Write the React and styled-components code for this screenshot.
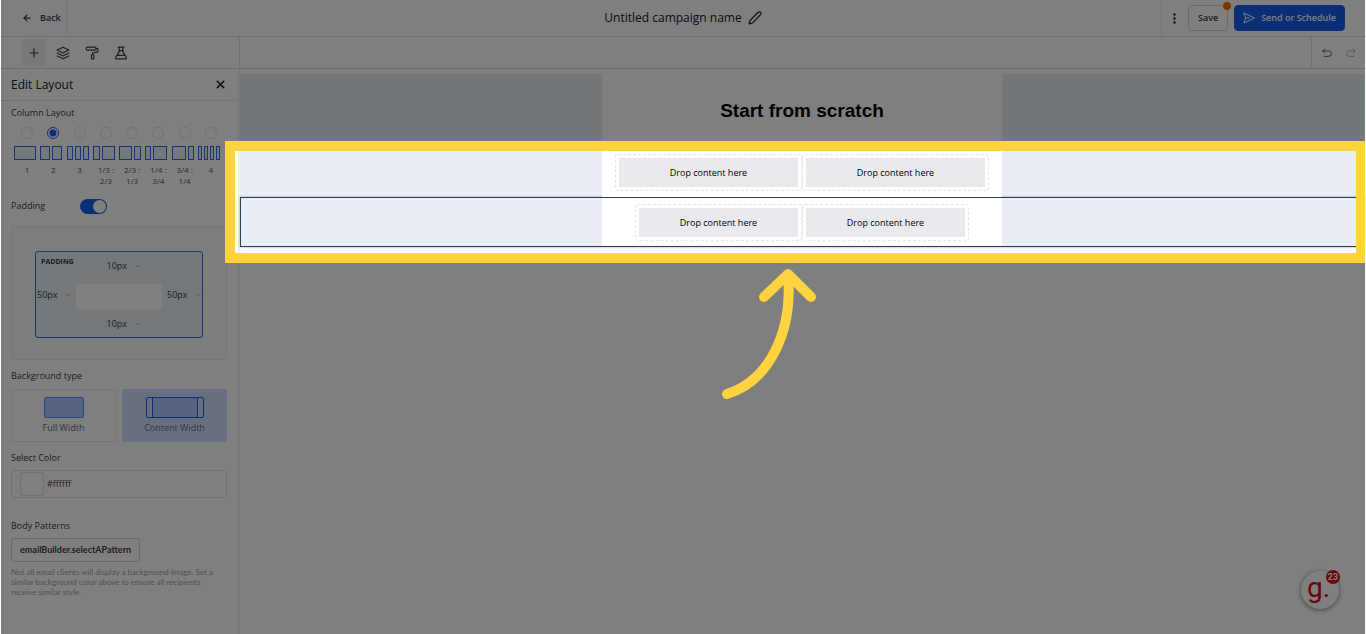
/** Email campaign builder: layout editing panel with a highlighted canvas area */

import { useState } from "react";
import styled, { createGlobalStyle } from "styled-components";
import { FiArrowLeft, FiChevronDown, FiLayers, FiPlus, FiX } from "react-icons/fi";
import { BsThreeDotsVertical } from "react-icons/bs";

const GlobalStyle = createGlobalStyle`
  * {
    box-sizing: border-box;
  }
  body {
    margin: 0;
    background: #fff;
    color: #1f2937;
    font-family: "Open Sans", "Noto Sans", sans-serif;
    font-size: 9px;
    line-height: 12px;
  }
  button, input, select {
    font: inherit;
    color: inherit;
    margin: 0;
    padding: 0;
    border: 0;
    background: none;
  }
`;

const Page = styled.div`
  position: relative;
  display: flex;
  flex-direction: column;
  min-height: 100vh;
  overflow: hidden;
`;

/* top bar */

const Header = styled.header`
  display: grid;
  grid-template-columns: 1fr auto 1fr;
  height: 37px;
  border-bottom: 1px solid #e4e5e8;
`;

const BackLink = styled.a`
  display: flex;
  align-items: center;
  justify-self: start;
  gap: 8px;
  width: 67px;
  padding-left: 22px;
  border-right: 1px solid #e9eaec;
  color: #344054;
  font-weight: 600;
  text-decoration: none;
`;

const CampaignName = styled.div`
  display: flex;
  align-items: center;
  gap: 6px;
  color: #101828;
  h1 {
    margin: 0;
    font-size: 12px;
    font-weight: 400;
    line-height: 16px;
  }
  button {
    display: flex;
  }
`;

const HeaderActions = styled.div`
  display: flex;
  align-items: center;
  justify-self: end;
  gap: 6px;
  padding: 0 21px 0 6px;
  border-left: 1px solid #e9eaec;
`;

const MoreButton = styled.button`
  display: flex;
  justify-content: center;
  width: 14px;
  color: #101828;
`;

const ActionButton = styled.button`
  position: relative;
  display: flex;
  align-items: center;
  justify-content: center;
  gap: 6px;
  height: 26px;
  padding: 0 ${(props) => (props.$primary ? "8px" : "9px")};
  border: 1px solid ${(props) => (props.$primary ? "#155eef" : "#d0d5dd")};
  border-radius: 4px;
  background: ${(props) => (props.$primary ? "#155eef" : "#fff")};
  color: ${(props) => (props.$primary ? "#fff" : "#344054")};
  font-weight: 600;
`;

const UnsavedDot = styled.span`
  position: absolute;
  top: -4px;
  right: -4px;
  width: 8px;
  height: 8px;
  border-radius: 50%;
  background: #f07000;
`;

/* second bar */

const Toolbar = styled.div`
  display: flex;
  height: 32px;
  border-bottom: 1px solid #dadbde;
`;

const ToolTabs = styled.div`
  display: flex;
  align-items: center;
  gap: 5px;
  width: 240px;
  padding-left: 22px;
  border-right: 1px solid #e4e5e8;
`;

const ToolButton = styled.button`
  display: flex;
  align-items: center;
  justify-content: center;
  width: 24px;
  height: 27px;
  border-radius: 2px;
  background: ${(props) => (props.$active ? "#eff1f5" : "none")};
  color: ${(props) => (props.$muted ? "#98a2b3" : "#344054")};
`;

const HistoryTools = styled.div`
  display: flex;
  align-items: center;
  width: 55px;
  margin-left: auto;
  padding-left: 3px;
  border-left: 1px solid #e4e5e8;
`;

const Workspace = styled.div`
  display: flex;
  flex: 1;
`;

/* side panel */

const Sidebar = styled.aside`
  flex: none;
  width: 240px;
  border-right: 2px solid #f0f1f3;
`;

const PanelHeader = styled.div`
  display: flex;
  align-items: center;
  justify-content: space-between;
  height: 32px;
  padding: 0 11px;
  border-bottom: 1px solid #e9eaec;
  color: #101828;
  h2 {
    margin: 0;
    font-size: 12px;
    font-weight: 400;
  }
  button {
    display: flex;
  }
`;

const PanelBody = styled.div`
  display: flex;
  flex-direction: column;
  padding: 6px 11px;
`;

const FieldLabel = styled.label`
  display: block;
  color: #344054;
  font-weight: 500;
`;

const ColumnOptions = styled.div`
  display: grid;
  grid-template-columns: repeat(8, 1fr);
  padding: 8px 3px 0;
`;

const ColumnOption = styled.label`
  display: flex;
  flex-direction: column;
  align-items: center;
  color: #475467;
  font-size: 8px;
  line-height: 11px;
  text-align: center;
  span {
    width: 20px;
    margin-top: 4px;
  }
`;

const Radio = styled.input`
  appearance: none;
  width: 12px;
  height: 12px;
  border: 1px solid #e0e2e6;
  border-radius: 50%;
  &:checked {
    border-color: #155eef;
    background: radial-gradient(#155eef 3px, transparent 4px);
  }
`;

const ColumnIcon = styled.div`
  display: flex;
  align-self: flex-start;
  gap: 2px;
  width: 22px;
  height: 14px;
  margin-top: 7px;
`;

const ColumnBar = styled.i`
  flex: ${(props) => props.$size} 1 0;
  border: 1px solid #2f6bea;
  background: #eaf1fb;
`;

const PaddingRow = styled.div`
  display: flex;
  align-items: center;
  height: 16px;
  margin-top: 12px;
  label {
    width: 69px;
  }
`;

const Switch = styled.input`
  appearance: none;
  display: flex;
  justify-content: flex-start;
  width: 27px;
  height: 15px;
  padding: 1px;
  border-radius: 8px;
  background: #d0d5dd;
  &::before {
    content: "";
    width: 13px;
    height: 13px;
    border-radius: 50%;
    background: #fff;
  }
  &:checked {
    justify-content: flex-end;
    background: #155eef;
  }
`;

const PaddingCard = styled.div`
  margin-top: 12px;
  padding: 24px 23px 21px;
  border: 1px solid #e9eaec;
  border-radius: 3px;
  background: #f9fafb;
`;

const PaddingBox = styled.fieldset`
  display: grid;
  grid-template-columns: 40px 1fr 40px;
  grid-template-rows: 28px 30px 27px;
  align-items: center;
  margin: 0;
  padding: 0;
  min-width: 0;
  border: 1px solid #2f6fd0;
  border-radius: 3px;
  background: #e8f0f5;
`;

const PaddingTitle = styled.span`
  align-self: start;
  padding: 4px 0 0 5px;
  color: #344054;
  font-size: 7px;
  font-weight: 700;
`;

const PaddingCenter = styled.div`
  grid-area: 2 / 2;
  align-self: end;
  height: 26px;
  border-radius: 3px;
  background: #fff;
`;

const SizeField = styled.label`
  grid-area: ${(props) => props.$area};
  display: flex;
  align-items: center;
  justify-self: ${(props) => props.$align};
  gap: 4px;
  padding-left: ${(props) => (props.$align === "center" ? "10px" : "1px")};
  color: #344054;
  font-weight: 500;
  svg {
    color: #98a2b3;
  }
`;

const SizeSelect = styled.select`
  appearance: none;
  width: 23px;
`;

const TypeOptions = styled.div`
  display: grid;
  grid-template-columns: 1fr 1fr;
  gap: 6px;
  margin-top: 7px;
`;

const TypeButton = styled.button`
  display: flex;
  flex-direction: column;
  align-items: center;
  gap: 4px;
  height: 53px;
  padding-top: 7px;
  border: 1px solid ${(props) => (props.$active ? "#d1e0ff" : "#e9eaec")};
  border-radius: 2px;
  background: ${(props) => (props.$active ? "#d1e0ff" : "#fff")};
  color: #667085;
`;

const TypeIcon = styled.span`
  display: flex;
  justify-content: center;
  width: ${(props) => (props.$framed ? "58px" : "40px")};
  height: 21px;
  padding: ${(props) => (props.$framed ? "0 5px" : "0")};
  border: 1px solid ${(props) => (props.$framed ? "#155eef" : "#528bff")};
  border-radius: 2px;
  background: ${(props) => (props.$framed ? "#d1e0ff" : "#adc8ff")};
  i {
    flex: 1;
    border: solid #155eef;
    border-width: 0 1px;
    background: #adc8ff;
  }
`;

const BlockLabel = styled(FieldLabel)`
  margin-top: 10px;
`;

const ColorField = styled.div`
  display: flex;
  align-items: center;
  gap: 3px;
  height: 28px;
  margin-top: 6px;
  padding-left: 8px;
  border: 1px solid #e0e2e6;
  border-radius: 4px;
  input {
    width: 100px;
    color: #344054;
  }
`;

const Swatch = styled.span`
  width: 24px;
  height: 24px;
  border: 1px solid #e0e2e6;
  border-radius: 2px;
  background: #fff;
`;

const PatternTitle = styled.h3`
  margin: 22px 0 6px;
  color: #344054;
  font-size: 9px;
  font-weight: 500;
`;

const PatternButton = styled.button`
  align-self: flex-start;
  height: 24px;
  padding: 0 8px;
  border: 1px solid #d0d5dd;
  border-radius: 2px;
  color: #344054;
  font-family: Lato, sans-serif;
  font-weight: 700;
`;

const Hint = styled.p`
  margin: 5px 0 0;
  color: #98a2b3;
  font-family: Lato, sans-serif;
  font-size: 8px;
  line-height: 10px;
`;

/* canvas */

const Canvas = styled.main`
  flex: 1;
  padding: 5px 2px 0 0;
`;

const Band = styled.section`
  display: flex;
  justify-content: center;
  background: ${(props) => (props.$heading ? "#e4eef4" : "#e9eef6")};
  outline: ${(props) => (props.$selected ? "1px solid #2c3e50" : "none")};
  outline-offset: -1px;
  box-shadow: ${(props) =>
    props.$selected ? "0 0 2px rgba(44, 62, 80, 0.5)" : "none"};
`;

const BandContent = styled.div`
  width: 400px;
  background: #fff;
`;

const Title = styled.h2`
  margin: 0;
  padding: 25px 0 24px;
  color: #000;
  font-family: "Liberation Sans", Arial, sans-serif;
  font-size: 19px;
  line-height: 24px;
  text-align: center;
`;

const Columns = styled.div`
  display: grid;
  grid-template-columns: 1fr 1fr;
  padding: 7px ${(props) => (props.$inset ? "33px" : "13px")} 6px;
`;

const DropColumn = styled.div`
  padding: 3px;
  border: 1px dashed #e4e5e8;
  border-radius: 3px;
`;

const DropZone = styled.div`
  height: 29px;
  background: #e9eaee;
  color: #000;
  line-height: 29px;
  text-align: center;
`;

/* guide layer */

const Shade = styled.div`
  position: absolute;
  inset: 0 1px;
  overflow: hidden;
  pointer-events: none;
`;

const Spotlight = styled.div`
  position: absolute;
  top: 141px;
  right: -1px;
  left: 224px;
  height: 122px;
  border: 10px solid #ffd23f;
  box-shadow: 0 0 0 2000px rgba(0, 0, 0, 0.5);
`;

const GuideArrow = styled.svg`
  position: absolute;
  top: 266px;
  left: calc(50% + 36px);
`;

const ChatBubble = styled.button`
  position: absolute;
  right: 27px;
  bottom: 25px;
  width: 38px;
  height: 38px;
  padding: 0 3px 4px 0;
  border-radius: 50%;
  background: #fff;
  box-shadow: 0 1px 5px rgba(0, 0, 0, 0.5);
  color: #e0000f;
  font-family: Roboto, sans-serif;
  font-size: 28px;
  line-height: 28px;
`;

const ChatCount = styled.span`
  position: absolute;
  top: -1px;
  right: -1px;
  width: 14px;
  height: 14px;
  border-radius: 50%;
  background: #e0000f;
  color: #fff;
  font-size: 9px;
  font-weight: 700;
  line-height: 14px;
`;

const columnLayouts = [
  { label: "1", sizes: [1] },
  { label: "2", sizes: [1, 1] },
  { label: "3", sizes: [1, 1, 1] },
  { label: "1/3 : 2/3", sizes: [1, 2] },
  { label: "2/3 : 1/3", sizes: [2, 1] },
  { label: "1/4 : 3/4", sizes: [1, 3] },
  { label: "3/4 : 1/4", sizes: [3, 1] },
  { label: "4", sizes: [1, 1, 1, 1] },
];

const paddingSides = [
  { name: "Top", area: "1 / 2", align: "center", value: "10px" },
  { name: "Left", area: "2 / 1", align: "start", value: "50px" },
  { name: "Right", area: "2 / 3", align: "end", value: "50px" },
  { name: "Bottom", area: "3 / 2", align: "center", value: "10px" },
];

function Icon({ size = 14, children }) {
  return (
    <svg
      width={size}
      height={size}
      viewBox="0 0 24 24"
      fill="none"
      stroke="currentColor"
      strokeWidth="2"
      strokeLinecap="round"
      strokeLinejoin="round"
    >
      {children}
    </svg>
  );
}

function TopBar() {
  return (
    <Header>
      <BackLink href="#back">
        <FiArrowLeft size={10} strokeWidth={3} />
        Back
      </BackLink>
      <CampaignName>
        <h1>Untitled campaign name</h1>
        <button aria-label="Rename">
          <Icon>
            <path d="M2 22l1.500-6L17.500 2.200a2.600 2.600 0 0 1 3.900 3.900L8 20.500z" />
          </Icon>
        </button>
      </CampaignName>
      <HeaderActions>
        <MoreButton aria-label="More">
          <BsThreeDotsVertical size={13} />
        </MoreButton>
        <ActionButton>
          Save
          <UnsavedDot />
        </ActionButton>
        <ActionButton $primary>
          <Icon size={12}>
            <path d="M2 2l21 10L2 22l3-10zM5 12h8" />
          </Icon>
          Send or Schedule
        </ActionButton>
      </HeaderActions>
    </Header>
  );
}

function ToolRow() {
  return (
    <Toolbar>
      <ToolTabs>
        <ToolButton $active aria-label="Add">
          <FiPlus size={14} />
        </ToolButton>
        <ToolButton aria-label="Layers">
          <FiLayers size={14} />
        </ToolButton>
        <ToolButton aria-label="Styles">
          <Icon>
            <rect x="2" y="2" width="17" height="5" rx="2" />
            <path d="M19 4.500h3V10l-9 2v3M11 15h4v7h-4z" />
          </Icon>
        </ToolButton>
        <ToolButton aria-label="Test">
          <Icon>
            <path d="M7 2h10M9 2v8l-6 9v3h18v-3l-6-9V2M8 8h8M6 16h12" />
          </Icon>
        </ToolButton>
      </ToolTabs>
      <HistoryTools>
        <ToolButton aria-label="Undo">
          <Icon size={10}>
            <path d="M7 2L2 7l5 5M2 7h14a6 6 0 0 1 0 13H5" />
          </Icon>
        </ToolButton>
        <ToolButton $muted aria-label="Redo">
          <Icon size={10}>
            <path d="M17 2l5 5-5 5M22 7H8a6 6 0 0 0 0 13h11" />
          </Icon>
        </ToolButton>
      </HistoryTools>
    </Toolbar>
  );
}

function LayoutPanel() {
  const [layout, setLayout] = useState("2");
  const [paddingOn, setPaddingOn] = useState(true);
  const [type, setType] = useState("content");
  const [color, setColor] = useState("#ffffff");

  return (
    <Sidebar>
      <PanelHeader>
        <h2>Edit Layout</h2>
        <button aria-label="Close">
          <FiX size={13} strokeWidth={3} />
        </button>
      </PanelHeader>
      <PanelBody>
        <FieldLabel as="div">Column Layout</FieldLabel>
        <ColumnOptions>
          {columnLayouts.map((item) => (
            <ColumnOption key={item.label}>
              <Radio
                type="radio"
                name="layout"
                checked={layout === item.label}
                onChange={() => setLayout(item.label)}
              />
              <ColumnIcon>
                {item.sizes.map((size, i) => (
                  <ColumnBar key={i} $size={size} />
                ))}
              </ColumnIcon>
              <span>{item.label}</span>
            </ColumnOption>
          ))}
        </ColumnOptions>

        <PaddingRow>
          <FieldLabel htmlFor="padding">Padding</FieldLabel>
          <Switch
            id="padding"
            type="checkbox"
            checked={paddingOn}
            onChange={(e) => setPaddingOn(e.target.checked)}
          />
        </PaddingRow>
        <PaddingCard>
          <PaddingBox>
            <PaddingTitle>PADDING</PaddingTitle>
            {paddingSides.map((side) => (
              <SizeField key={side.name} $area={side.area} $align={side.align}>
                <SizeSelect aria-label={side.name} defaultValue={side.value}>
                  <option>10px</option>
                  <option>50px</option>
                </SizeSelect>
                <FiChevronDown size={8} />
              </SizeField>
            ))}
            <PaddingCenter />
          </PaddingBox>
        </PaddingCard>

        <BlockLabel as="div">Background type</BlockLabel>
        <TypeOptions>
          <TypeButton $active={type === "full"} onClick={() => setType("full")}>
            <TypeIcon />
            Full Width
          </TypeButton>
          <TypeButton
            $active={type === "content"}
            onClick={() => setType("content")}
          >
            <TypeIcon $framed>
              <i />
            </TypeIcon>
            Content Width
          </TypeButton>
        </TypeOptions>

        <BlockLabel htmlFor="color">Select Color</BlockLabel>
        <ColorField>
          <Swatch />
          <input
            id="color"
            value={color}
            onChange={(e) => setColor(e.target.value)}
          />
        </ColorField>

        <PatternTitle>Body Patterns</PatternTitle>
        <PatternButton>emailBuilder.selectAPattern</PatternButton>
        <Hint>
          Not all email clients will display a background image. Set a similar
          background color above to ensure all recipients receive similar style.
        </Hint>
      </PanelBody>
    </Sidebar>
  );
}

function DropColumns({ inset }) {
  return (
    <Columns $inset={inset}>
      <DropColumn>
        <DropZone>Drop content here</DropZone>
      </DropColumn>
      <DropColumn>
        <DropZone>Drop content here</DropZone>
      </DropColumn>
    </Columns>
  );
}

function App() {
  return (
    <Page>
      <GlobalStyle />
      <TopBar />
      <ToolRow />
      <Workspace>
        <LayoutPanel />
        <Canvas>
          <Band $heading>
            <BandContent>
              <Title>Start from scratch</Title>
            </BandContent>
          </Band>
          <Band>
            <BandContent>
              <DropColumns />
            </BandContent>
          </Band>
          <Band $selected>
            <BandContent>
              <DropColumns inset />
            </BandContent>
          </Band>
        </Canvas>
      </Workspace>
      <ChatBubble aria-label="Open chat">
        g.
        <ChatCount>23</ChatCount>
      </ChatBubble>
      <Shade>
        <Spotlight />
        <GuideArrow
          width="104"
          height="136"
          fill="none"
          stroke="#ffd23f"
          strokeWidth="10"
          strokeLinecap="round"
          strokeLinejoin="round"
        >
          <path d="M8 128C50 115 74 66 69 9M45 31L69 8l23 23" />
        </GuideArrow>
      </Shade>
    </Page>
  );
}

export default App;
